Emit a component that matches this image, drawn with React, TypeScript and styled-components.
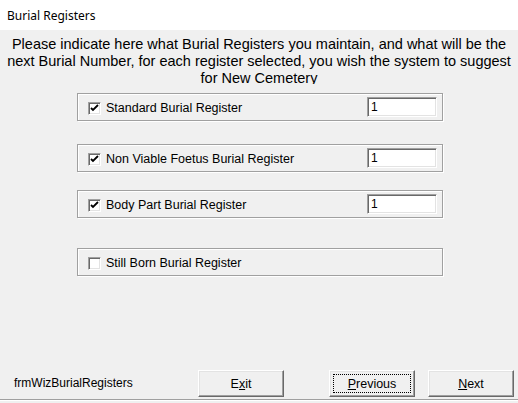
import React from "react";
import styled, { createGlobalStyle } from "styled-components";

const Global = createGlobalStyle`
  html, body { margin: 0; padding: 0; background: #f0f0f0; }
  body { font-family: Arial, "Liberation Sans", sans-serif; }
`;

const Window = styled.div`
  width: 518px;
  height: 403px;
  background: #f0f0f0;
  display: flex;
  flex-direction: column;
  overflow: hidden;
`;

const TitleBar = styled.div`
  height: 30px;
  background: #ffffff;
  display: flex;
  align-items: center;
  padding-left: 7px;
  font-family: "Noto Sans", "Open Sans", sans-serif;
  font-size: 12px;
  color: #000;
  flex: none;
`;

const Intro = styled.div`
  margin-top: 6px;
  height: 48px;
  overflow: hidden;
  text-align: center;
  font-family: "Liberation Sans", Arial, sans-serif;
  font-size: 14.5px;
  line-height: 17px;
  color: #000;
  padding: 0 4px;
  flex: none;
`;

const Groups = styled.div`
  display: flex;
  flex-direction: column;
  padding-left: 77px;
  flex: none;
`;

const Group = styled.div<{ $top: number }>`
  margin-top: ${(p) => p.$top}px;
  width: 364px;
  height: 26px;
  border: 1px solid #a0a0a0;
  box-shadow: 1px 1px 0 #ffffff, inset 1px 1px 0 #ffffff;
  display: flex;
  align-items: flex-start;
  box-sizing: content-box;
`;

const CheckRow = styled.label`
  display: flex;
  align-items: center;
  gap: 5px;
  margin-left: 10px;
  margin-top: 7px;
  font-family: "Liberation Sans", Arial, sans-serif;
  font-size: 12.5px;
  color: #000;
  flex: 1;
`;

const Box = styled.span`
  width: 13px;
  height: 13px;
  box-sizing: border-box;
  background: #fff;
  border-top: 1px solid #a0a0a0;
  border-left: 1px solid #a0a0a0;
  border-right: 1px solid #fff;
  border-bottom: 1px solid #fff;
  box-shadow: inset 1px 1px 0 #696969, inset -1px -1px 0 #e3e3e3;
  display: flex;
  align-items: center;
  justify-content: center;
  flex: none;
`;

const NumberField = styled.div`
  width: 70px;
  height: 20px;
  box-sizing: border-box;
  margin-top: 3px;
  margin-right: 5px;
  background: #fff;
  border-top: 1px solid #a0a0a0;
  border-left: 1px solid #a0a0a0;
  border-right: 1px solid #fff;
  border-bottom: 1px solid #fff;
  box-shadow: inset 1px 1px 0 #696969, inset -1px -1px 0 #e3e3e3;
  font-family: "Liberation Sans", Arial, sans-serif;
  font-size: 12px;
  line-height: 18px;
  padding-left: 3px;
  color: #000;
  flex: none;
`;

const Footer = styled.div`
  margin-top: auto;
  margin-bottom: 3px;
  height: 33px;
  box-sizing: border-box;
  padding-top: 3px;
  display: flex;
  align-items: flex-start;
  border-bottom: 1px solid #a0a0a0;
  box-shadow: 0 1px 0 #fff;
  flex: none;
`;

const FormName = styled.div`
  width: 184px;
  padding-left: 14px;
  padding-top: 6px;
  font-family: "Liberation Sans", Arial, sans-serif;
  font-size: 12px;
  color: #000;
`;

const Button = styled.button<{ $gap: number; $focus?: boolean }>`
  margin-left: ${(p) => p.$gap}px;
  width: 86px;
  height: 27px;
  box-sizing: border-box;
  background: #f0f0f0;
  border-top: 1px solid #fff;
  border-left: 1px solid #fff;
  border-right: 1px solid #696969;
  border-bottom: 1px solid #696969;
  box-shadow: inset -1px -1px 0 #a0a0a0, inset 1px 1px 0 #e3e3e3;
  font-family: "Liberation Sans", Arial, sans-serif;
  font-size: 12.5px;
  color: #000;
  padding: 0;
  position: relative;
  display: flex;
  align-items: center;
  justify-content: center;
  &::after {
    content: "";
    display: ${(p) => (p.$focus ? "block" : "none")};
    position: absolute;
    inset: 3px;
    border: 1px dotted #000;
  }
`;

const Check = () => (
  <svg width="9" height="9" viewBox="0 0 9 9">
    <path d="M1 4 L3 6 L8 1" stroke="#000" strokeWidth="1.8" fill="none" />
  </svg>
);

type Reg = { label: string; checked: boolean; top: number; value?: string };

const regs: Reg[] = [
  { label: "Standard Burial Register", checked: true, top: 9, value: "1" },
  { label: "Non Viable Foetus Burial Register", checked: true, top: 23, value: "1" },
  { label: "Body Part Burial Register", checked: true, top: 18, value: "1" },
  { label: "Still Born Burial Register", checked: false, top: 30 },
];

export default function App() {
  return (
    <Window>
      <Global />
      <TitleBar>Burial Registers</TitleBar>
      <Intro>
        Please indicate here what Burial Registers you maintain, and what will be the next
        Burial Number, for each register selected, you wish the system to suggest for New
        Cemetery
      </Intro>
      <Groups>
        {regs.map((r) => (
          <Group key={r.label} $top={r.top}>
            <CheckRow>
              <Box>{r.checked && <Check />}</Box>
              {r.label}
            </CheckRow>
            {r.value && <NumberField>{r.value}</NumberField>}
          </Group>
        ))}
      </Groups>
      <Footer>
        <FormName>frmWizBurialRegisters</FormName>
        <Button $gap={0}>
          E<u>x</u>it
        </Button>
        <Button $gap={45} $focus>
          <u>P</u>revious
        </Button>
        <Button $gap={13}>
          <u>N</u>ext
        </Button>
      </Footer>
    </Window>
  );
}
